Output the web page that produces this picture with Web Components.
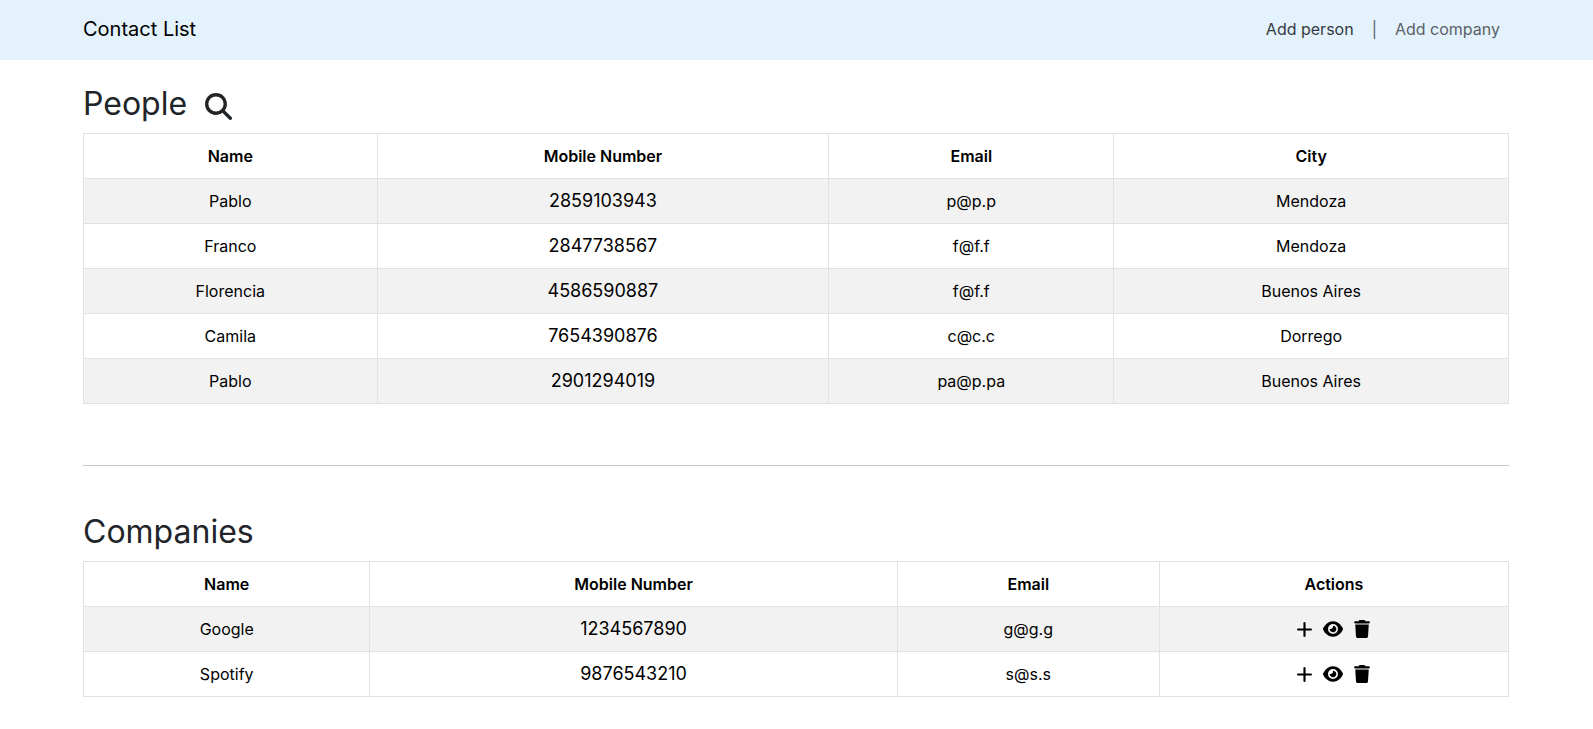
<!DOCTYPE html>
<html lang="en">
<head>
<meta charset="utf-8">
<meta name="viewport" content="width=device-width, initial-scale=1">
<title>Contact List</title>
<style>
  body {
    margin: 0;
    background: #fff;
    color: #212529;
    font: 400 16px/26px Inter, "Liberation Sans", sans-serif;
  }
  main {
    box-sizing: border-box;
    max-width: 1453px;
    margin: 0 auto;
    padding: 23px 14px 22px 13px;
  }
  hr {
    height: 1px;
    margin: 61px 0 45px;
    border: 0;
    background: #c7c8c9;
  }
</style>
</head>
<body>
<site-nav>
  Contact List
  <nav-link slot="links" href="#person" active>Add person</nav-link>
  <nav-link slot="links" href="#company">Add company</nav-link>
</site-nav>
<main>
  <contact-section heading="People" searchable><contact-table id="people"></contact-table></contact-section>
  <hr>
  <contact-section heading="Companies"><contact-table id="companies" actions></contact-table></contact-section>
</main>

<script>
const ICONS = {
  search: ['0 0 512 512', 'M416 208c0 45.900-14.900 88.300-40 122.700L502.600 457.400c12.500 12.500 12.500 32.800 0 45.300s-32.800 12.500-45.300 0L330.700 376c-34.400 25.200-76.800 40-122.700 40C93.100 416 0 322.900 0 208S93.100 0 208 0S416 93.100 416 208zM208 352a144 144 0 1 0 0-288 144 144 0 1 0 0 288z'],
  plus: ['0 0 14 14', 'M6 1a1 1 0 0 1 2 0v5h5a1 1 0 0 1 0 2H8v5a1 1 0 0 1-2 0V8H1a1 1 0 0 1 0-2h5z'],
  eye: ['0 32 576 448', 'M288 32c-80.800 0-145.500 36.800-192.600 80.600C48.600 156 17.300 208 2.500 243.700c-3.300 7.900-3.300 16.700 0 24.600C17.300 304 48.600 356 95.400 399.400C142.500 443.200 207.200 480 288 480s145.500-36.800 192.600-80.600c46.800-43.500 78.100-95.400 93-131.100c3.300-7.900 3.300-16.700 0-24.600c-14.900-35.700-46.200-87.700-93-131.100C433.500 68.800 368.800 32 288 32zM144 256a144 144 0 1 1 288 0 144 144 0 1 1 -288 0zm144-64c0 35.300-28.700 64-64 64c-7.100 0-13.900-1.200-20.300-3.300c-5.500-1.800-11.900 1.600-11.700 7.400c.3 6.900 1.300 13.800 3.200 20.700c13.700 51.200 66.400 81.600 117.600 67.900s81.600-66.400 67.900-117.600c-11.100-41.500-47.800-69.400-88.600-71.100c-5.800-.2-9.200 6.100-7.400 11.700c2.100 6.400 3.300 13.200 3.300 20.300z'],
  trash: ['0 0 448 512', 'M135.200 17.700L128 32H32C14.300 32 0 46.300 0 64S14.300 96 32 96H416c17.700 0 32-14.300 32-32s-14.300-32-32-32H320l-7.200-14.300C307.400 6.800 296.300 0 284.200 0H163.800c-12.100 0-23.200 6.800-28.600 17.700zM416 128H32L53.200 467c1.600 25.300 22.600 45 47.900 45H346.900c25.300 0 46.300-19.700 47.900-45L416 128z']
};

function iconButton(name, label) {
  const [box, path] = ICONS[name];
  return `<button type="button" class="${name}" aria-label="${label}"><svg viewBox="${box}" aria-hidden="true"><path d="${path}"/></svg></button>`;
}

const BUTTON_STYLE = `
  button { display: block; margin: 0; padding: 0; border: 0; background: none; color: inherit; cursor: pointer; }
  svg { display: block; width: 100%; height: 100%; fill: currentColor; }`;

customElements.define('site-nav', class extends HTMLElement {
  constructor() {
    super();
    this.attachShadow({ mode: 'open' }).innerHTML = `
      <style>
        :host { display: block; background: #e3f2fd; }
        nav { box-sizing: border-box; max-width: 1453px; min-height: 60px; margin: 0 auto; padding: 0 23px 2px 13px;
              display: flex; align-items: center; justify-content: space-between; }
        .brand { color: #000; font-size: 20px; line-height: 32px; text-decoration: none; }
        .links { display: flex; gap: 18px; color: #595f63; }
      </style>
      <nav><a class="brand" href="#"><slot></slot></a><div class="links"><slot name="links"></slot></div></nav>`;
  }
});

customElements.define('nav-link', class extends HTMLElement {
  constructor() {
    super();
    this.attachShadow({ mode: 'open' }).innerHTML = `
      <style>
        :host { display: flex; gap: 18px; }
        a { color: #5b6165; text-decoration: none; }
        :host([active]) a { color: #343a3e; }
        :host([active])::after { content: "|"; }
      </style>
      <a><slot></slot></a>`;
  }
  connectedCallback() {
    this.shadowRoot.querySelector('a').href = this.getAttribute('href');
  }
});

customElements.define('contact-section', class extends HTMLElement {
  connectedCallback() {
    this.attachShadow({ mode: 'open' }).innerHTML = `
      <style>
        :host { display: block; }
        header { display: flex; align-items: center; gap: 18px; margin-bottom: 8px; }
        h2 { margin: 0; font-size: 32px; line-height: 42px; font-weight: 400; }
        ${BUTTON_STYLE}
        button { width: 27px; height: 27px; margin-top: 4px; }
      </style>
      <header><h2>${this.getAttribute('heading')}</h2>${this.hasAttribute('searchable') ? iconButton('search', 'Search people') : ''}</header>
      <slot></slot>`;
  }
});

customElements.define('contact-table', class extends HTMLElement {
  constructor() {
    super();
    this.attachShadow({ mode: 'open' });
  }
  set data({ columns, rows }) {
    const actions = this.hasAttribute('actions')
      ? `<td><div>${iconButton('plus', 'Add')}${iconButton('eye', 'View')}${iconButton('trash', 'Delete')}</div></td>` : '';
    this.shadowRoot.innerHTML = `
      <style>
        :host { display: block; color: #000; }
        table { width: 100%; border-collapse: collapse; text-align: center; }
        th, td { padding: 9px; border: 1px solid #dee2e6; }
        th { font-weight: 600; }
        td:nth-child(2) { font-size: 18px; }
        tbody tr:nth-child(odd) { background: #f2f2f2; }
        div { display: flex; align-items: center; justify-content: center; gap: 11px; height: 26px; }
        ${BUTTON_STYLE}
        .plus { width: 15px; height: 15px; }
        .eye { width: 20px; height: 16px; }
        .trash { width: 16px; height: 18px; }
      </style>
      <table>
        <colgroup>${columns.map(c => `<col style="width:${c[1]}%">`).join('')}</colgroup>
        <thead><tr>${columns.map(c => `<th scope="col">${c[0]}</th>`).join('')}</tr></thead>
        <tbody>${rows.map(r => `<tr>${r.map(v => `<td>${v}</td>`).join('')}${actions}</tr>`).join('')}</tbody>
      </table>`;
  }
});

document.getElementById('people').data = {
  columns: [['Name', 20.6], ['Mobile Number', 31.7], ['Email', 20], ['City', 27.7]],
  rows: [
    ['Pablo', '2859103943', 'p@p.p', 'Mendoza'],
    ['Franco', '2847738567', 'f@f.f', 'Mendoza'],
    ['Florencia', '4586590887', 'f@f.f', 'Buenos Aires'],
    ['Camila', '7654390876', 'c@c.c', 'Dorrego'],
    ['Pablo', '2901294019', 'pa@p.pa', 'Buenos Aires']
  ]
};
document.getElementById('companies').data = {
  columns: [['Name', 20.1], ['Mobile Number', 37], ['Email', 18.4], ['Actions', 24.5]],
  rows: [
    ['Google', '1234567890', 'g@g.g'],
    ['Spotify', '9876543210', 's@s.s']
  ]
};
</script>
</body>
</html>
